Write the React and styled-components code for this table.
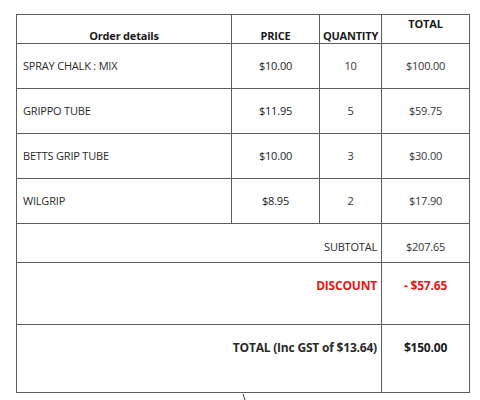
import styled, { createGlobalStyle } from "styled-components";

const GlobalStyle = createGlobalStyle`
  html, body {
    margin: 0;
    padding: 0;
    background: #ffffff;
  }
  body {
    font-family: "Open Sans", "Noto Sans", sans-serif;
  }
`;

const items = [
  { name: "SPRAY CHALK : MIX", price: "$10.00", qty: "10", total: "$100.00" },
  { name: "GRIPPO TUBE", price: "$11.95", qty: "5", total: "$59.75" },
  { name: "BETTS GRIP TUBE", price: "$10.00", qty: "3", total: "$30.00" },
  { name: "WILGRIP", price: "$8.95", qty: "2", total: "$17.90" },
];

const App = () => {
  return (
    <Page>
      <GlobalStyle />
      <Table>
        <colgroup>
          <Col $w={215} />
          <Col $w={88} />
          <Col $w={62} />
          <Col $w={88} />
        </colgroup>
        <thead>
          <HeadRow>
            <HeadCell>Order details</HeadCell>
            <HeadCell>PRICE</HeadCell>
            <HeadCell>QUANTITY</HeadCell>
            <HeadCell $top>TOTAL</HeadCell>
          </HeadRow>
        </thead>
        <tbody>
          {items.map((item) => (
            <Row key={item.name} $h={45}>
              <NameCell>{item.name}</NameCell>
              <Cell $pad={14}>{item.price}</Cell>
              <Cell $pad={14} $light>
                {item.qty}
              </Cell>
              <Cell $pad={14} $light>
                {item.total}
              </Cell>
            </Row>
          ))}
          <Row $h={39}>
            <LabelCell colSpan={3}>SUBTOTAL</LabelCell>
            <Cell $light>$207.65</Cell>
          </Row>
          <Row $h={62}>
            <LabelCell colSpan={3} $red $bold>
              DISCOUNT
            </LabelCell>
            <Cell $red $bold>
              - $57.65
            </Cell>
          </Row>
          <Row $h={68}>
            <LabelCell colSpan={3} $bold>
              TOTAL (Inc GST of $13.64)
            </LabelCell>
            <Cell $bold>$150.00</Cell>
          </Row>
        </tbody>
      </Table>
      <Stroke width="6" height="9" viewBox="0 0 6 9">
        <line x1="1" y1="0" x2="4" y2="9" stroke="#444" strokeWidth="1" />
      </Stroke>
    </Page>
  );
};

const Page = styled.div`
  padding: 14px 0 0 16px;
  width: 480px;
  height: 400px;
  box-sizing: border-box;
  overflow: hidden;
`;

const Table = styled.table`
  border-collapse: collapse;
  table-layout: fixed;
  width: 454px;
  color: #222222;
  font-size: 11px;
  letter-spacing: -0.2px;

  td,
  th {
    border: 1px solid #5e5e5e;
    padding: 0;
  }
`;

const Col = styled.col`
  width: ${(p) => p.$w}px;
`;

const HeadRow = styled.tr`
  height: 29px;
`;

const HeadCell = styled.th`
  font-weight: 700;
  font-size: 11px;
  text-align: center;
  vertical-align: ${(p) => (p.$top ? "top" : "bottom")};
  padding: ${(p) => (p.$top ? "1px 0 0" : "0")} !important;
  line-height: 15px;
  color: #1a1a1a;
`;

const Row = styled.tr`
  height: ${(p) => p.$h}px;
`;

const NameCell = styled.td`
  text-align: left;
  vertical-align: top;
  padding: 14px 0 0 6px !important;
  line-height: 15px;
  color: #2a2a2a;
`;

const Cell = styled.td`
  text-align: center;
  vertical-align: top;
  padding: ${(p) => p.$pad ?? 15}px 0 0 !important;
  line-height: 15px;
  color: ${(p) => (p.$red ? "#f21212" : p.$light ? "#363636" : "#1a1a1a")};
  font-weight: ${(p) => (p.$bold ? 700 : 400)};
  font-size: ${(p) => (p.$bold ? "12px" : "11px")};
`;

const LabelCell = styled.td`
  text-align: right;
  vertical-align: top;
  padding: 15px 4px 0 0 !important;
  line-height: 15px;
  color: ${(p) => (p.$red ? "#f21212" : "#2a2a2a")};
  font-weight: ${(p) => (p.$bold ? 700 : 400)};
  font-size: ${(p) => (p.$bold ? "12px" : "11px")};
`;

const Stroke = styled.svg`
  display: block;
  margin: 1px 0 0 226px;
`;

export default App;
